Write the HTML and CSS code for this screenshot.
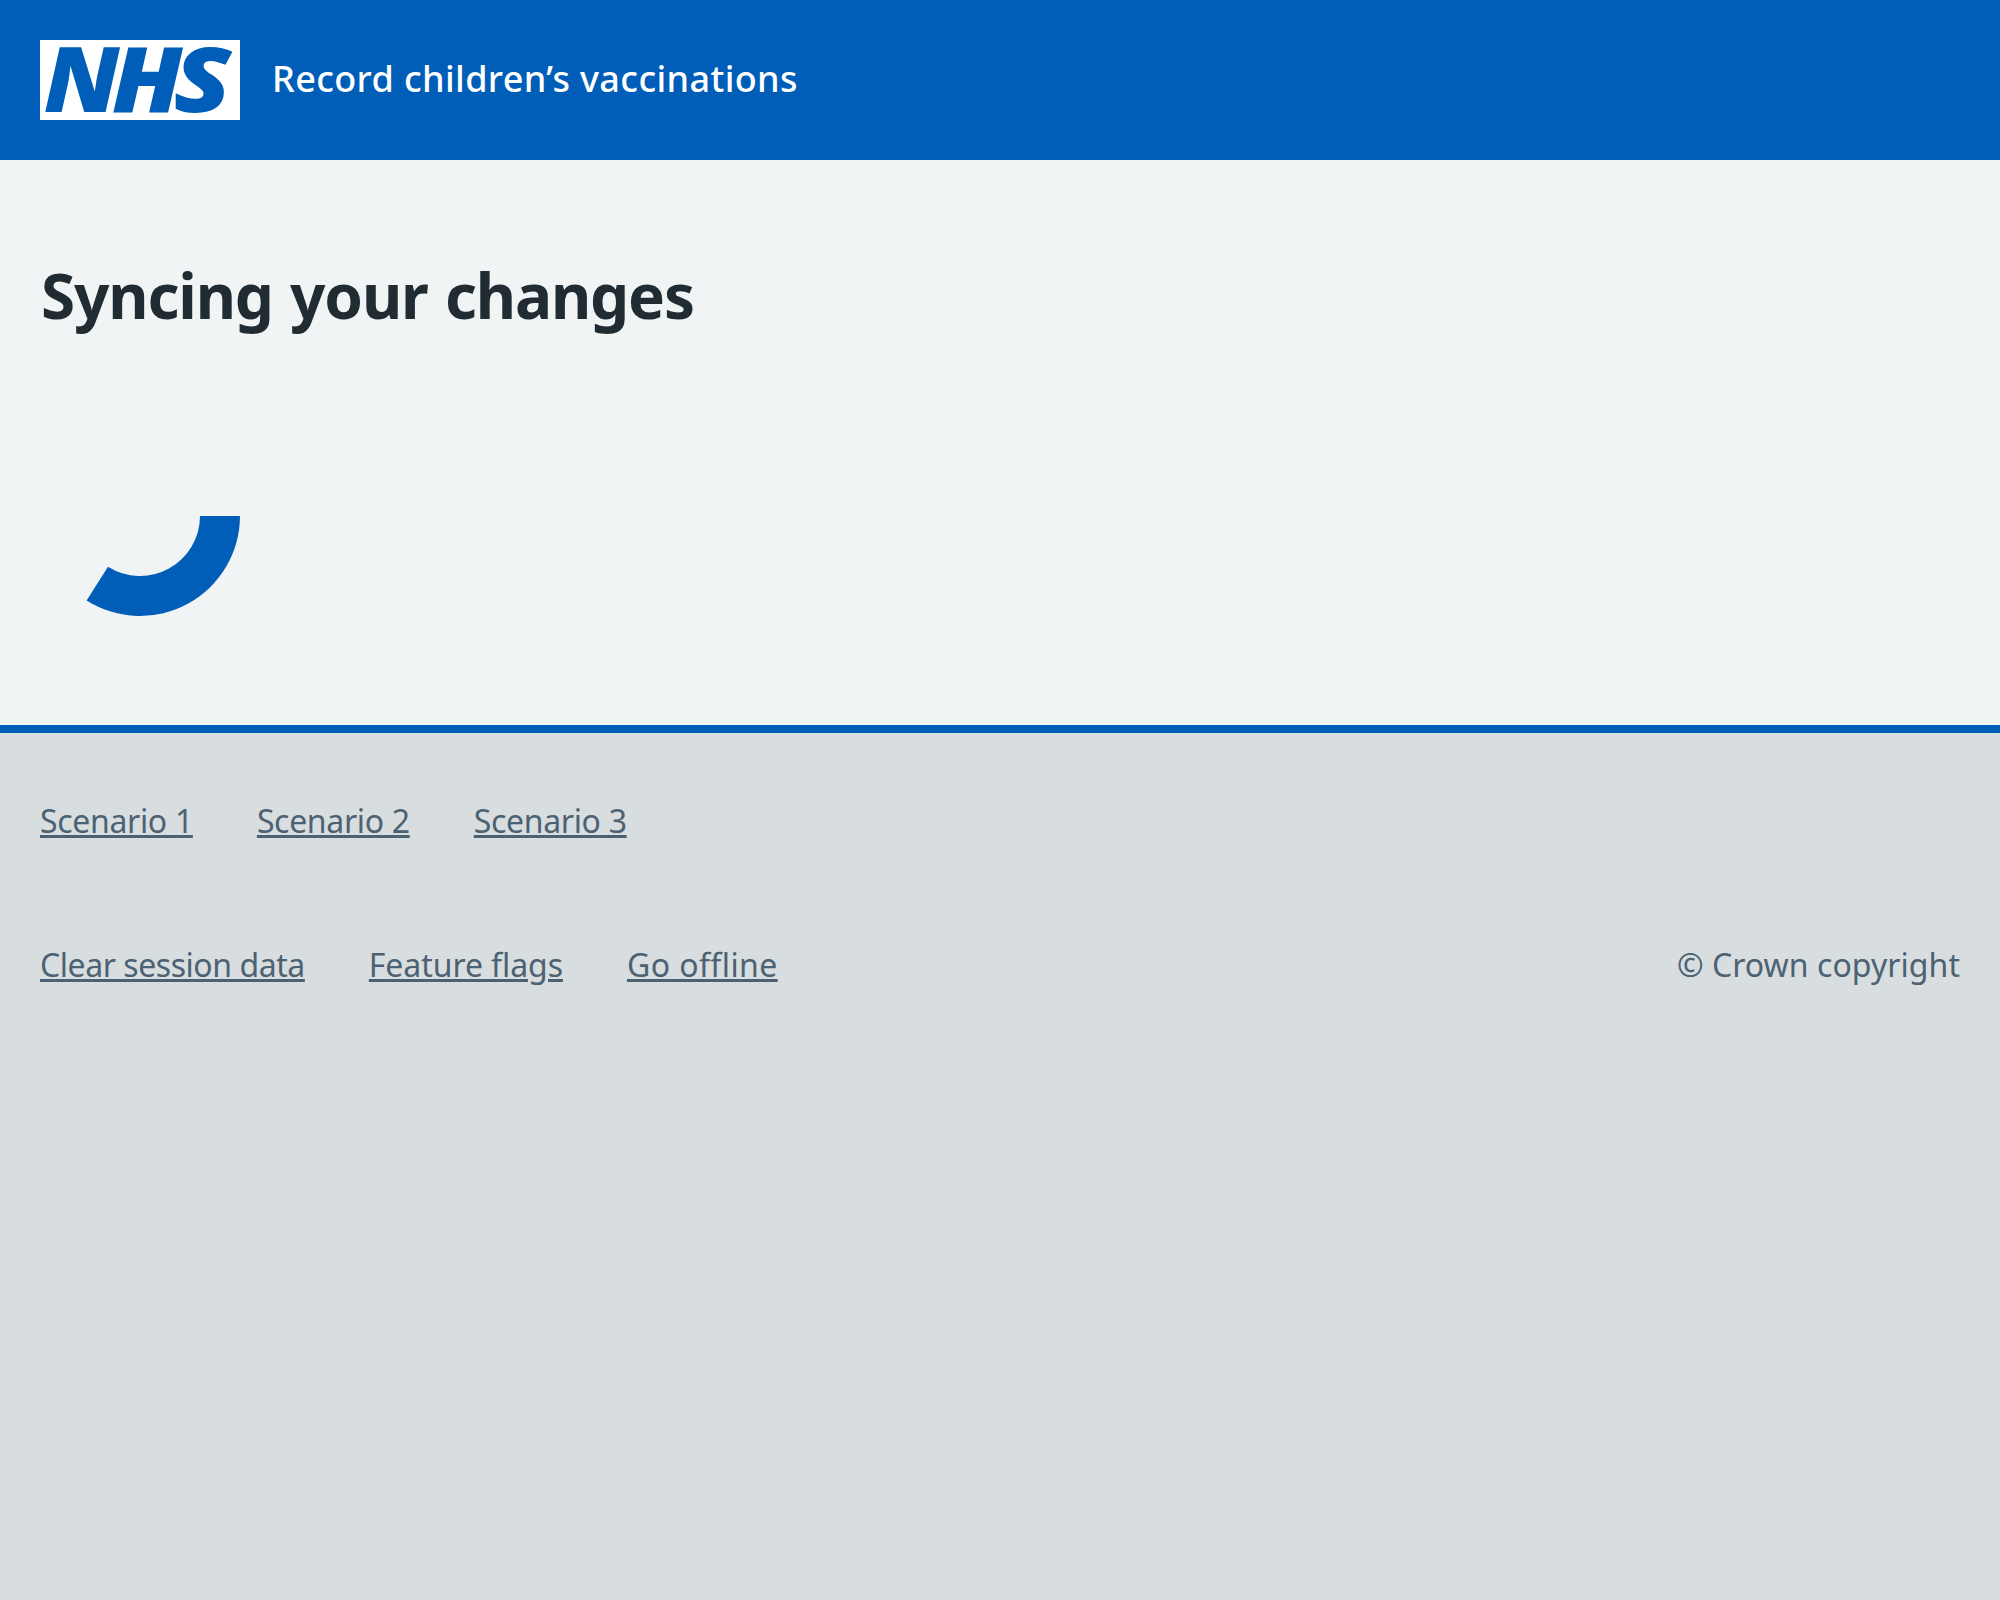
FILE: index.html
```html
<!DOCTYPE html>
<html lang="en">
<head>
<meta charset="utf-8">
<title>Syncing your changes</title>
<link rel="stylesheet" href="styles.css">
</head>
<body>
<header class="header">
  <svg class="logo" viewBox="0 0 200 80" role="img" aria-label="NHS">
    <rect width="200" height="80" fill="#fff"/>
    <g class="logo-text">
      <text transform="translate(3.8 72.3) scale(1.055 1)">N</text>
      <text transform="translate(71.8 72.3) scale(1.09 1)">H</text>
      <text transform="translate(133.5 72.3) scale(1.16 1)">S</text>
    </g>
  </svg>
  <span class="service">Record children’s vaccinations</span>
</header>
<main class="main">
  <h1 class="title">Syncing your changes</h1>
  <svg class="spinner" viewBox="0 0 200 200" aria-hidden="true">
    <path d="M200 100A100 100 0 0 1 46.6 184.5L68 150.7A60 60 0 0 0 160 100Z" fill="#005eb8"/>
  </svg>
</main>
<footer class="footer">
  <nav class="links scenarios"><a href="#">Scenario 1</a><a href="#">Scenario 2</a><a href="#">Scenario 3</a></nav>
  <div class="meta">
    <nav class="links"><a class="clear" href="#">Clear session data</a><a class="flags" href="#">Feature flags</a><a class="offline" href="#">Go offline</a></nav>
    <p class="copyright">© Crown copyright</p>
  </div>
</footer>
</body>
</html>
```
FILE: styles.css
```css
* { box-sizing: border-box; }
body {
  margin: 0;
  min-height: 1600px;
  background: #d8dde0;
  font-family: "Noto Sans", "Open Sans", sans-serif;
  color: #212b32;
}
.header {
  display: flex;
  align-items: center;
  gap: 32px;
  height: 160px;
  padding: 0 40px;
  background: #005eb8;
  color: #fff;
}
.logo { width: 200px; height: 80px; overflow: visible; }
.logo-text {
  font: italic 800 91px "Open Sans", sans-serif;
  fill: #005eb8;
}
.service {
  padding-bottom: 2px;
  font-size: 36px;
  font-weight: 500;
  line-height: 48px;
  letter-spacing: 0.38px;
}
.main { height: 565px; padding: 95px 40px 0; background: #f0f4f5; }
.title {
  margin: 0 0 81px;
  padding-left: 1px;
  font-size: 62px;
  line-height: 80px;
  font-weight: 700;
  letter-spacing: -1.15px;
  word-spacing: 2.3px;
}
.spinner { display: block; width: 200px; height: 200px; }
.footer {
  padding: 64px 40px 0;
  border-top: 8px solid #005eb8;
  font-size: 32px;
  line-height: 48px;
  color: #4c6272;
}
.links { display: flex; gap: 64px; }
.links a {
  color: #4c6272;
  text-decoration-thickness: 3px;
  text-underline-offset: 2px;
}
.scenarios a { letter-spacing: -0.33px; }
.links .clear { letter-spacing: -0.45px; }
.links .flags { letter-spacing: -0.07px; }
.links .offline { letter-spacing: 0.4px; font-variant-ligatures: none; }
.meta { display: flex; justify-content: space-between; margin-top: 96px; }
.copyright { margin: 0; letter-spacing: 0.05px; }
```
